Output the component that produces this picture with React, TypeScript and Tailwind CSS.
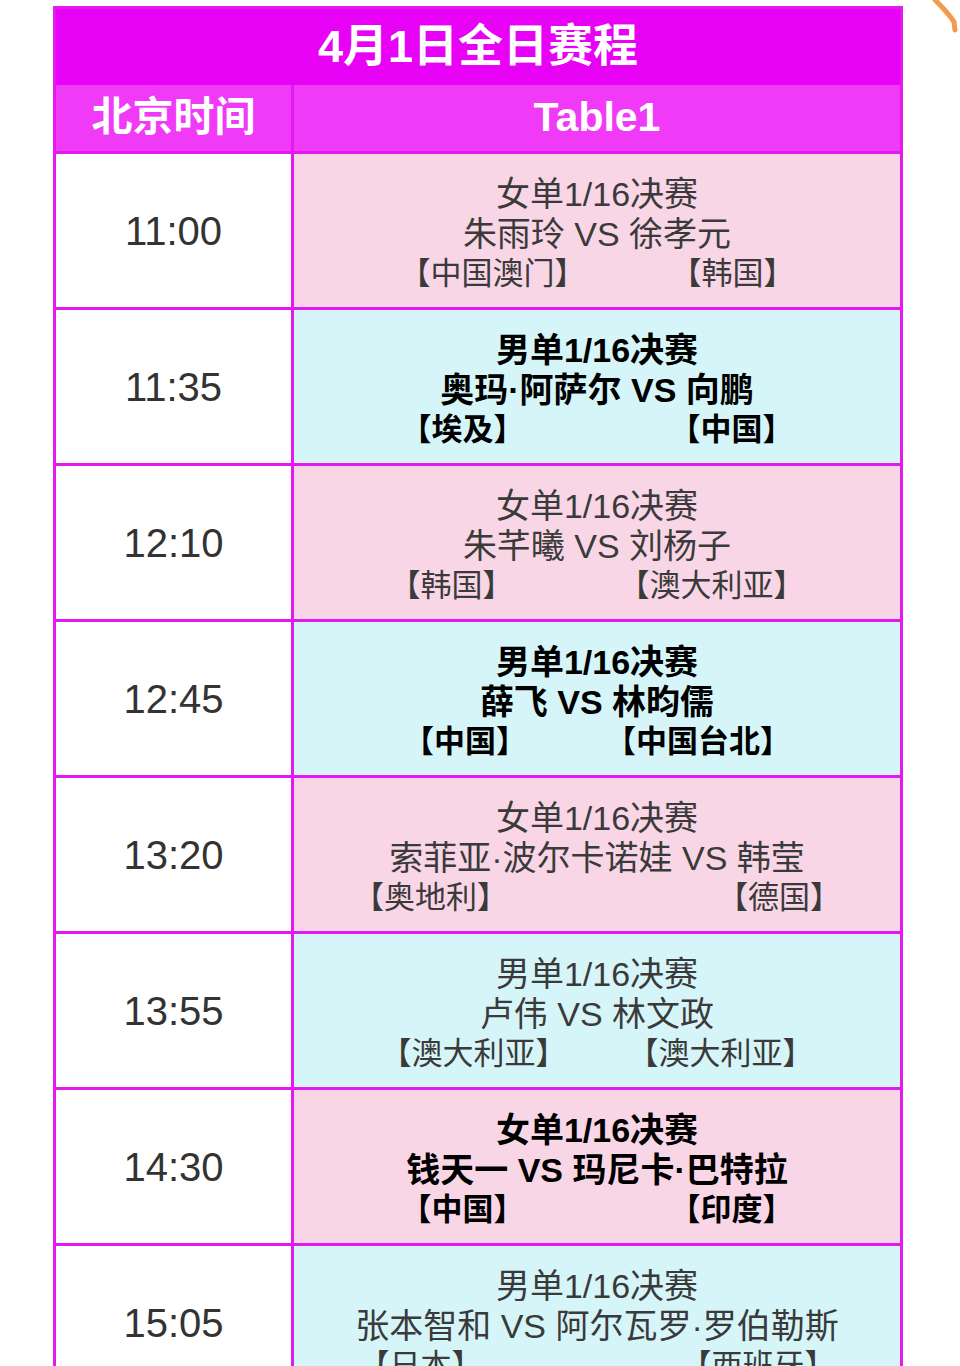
import React from "react";

type Match = {
  time: string;
  event: string;
  players: string;
  left: string;
  right: string;
  gap: string;
  bold?: boolean;
};

const matches: Match[] = [
  { time: "11:00", event: "女单1/16决赛", players: "朱雨玲 VS 徐孝元", left: "【中国澳门】", right: "【韩国】", gap: "gap-[85px]" },
  { time: "11:35", event: "男单1/16决赛", players: "奥玛·阿萨尔 VS 向鹏", left: "【埃及】", right: "【中国】", gap: "gap-[145px]", bold: true },
  { time: "12:10", event: "女单1/16决赛", players: "朱芊曦 VS 刘杨子", left: "【韩国】", right: "【澳大利亚】", gap: "gap-[105px]" },
  { time: "12:45", event: "男单1/16决赛", players: "薛飞 VS 林昀儒", left: "【中国】", right: "【中国台北】", gap: "gap-[78px]", bold: true },
  { time: "13:20", event: "女单1/16决赛", players: "索菲亚·波尔卡诺娃 VS 韩莹", left: "【奥地利】", right: "【德国】", gap: "gap-[209px]" },
  { time: "13:55", event: "男单1/16决赛", players: "卢伟 VS 林文政", left: "【澳大利亚】", right: "【澳大利亚】", gap: "gap-[61px]" },
  { time: "14:30", event: "女单1/16决赛", players: "钱天一 VS 玛尼卡·巴特拉", left: "【中国】", right: "【印度】", gap: "gap-[145px]", bold: true },
  { time: "15:05", event: "男单1/16决赛", players: "张本智和 VS 阿尔瓦罗·罗伯勒斯", left: "【日本】", right: "【西班牙】", gap: "gap-[198px]" },
];

const MatchRow = ({ m, index }: { m: Match; index: number }) => {
  const bg = index % 2 === 0 ? "bg-[#f8d6e6]" : "bg-[#d6f5f8]";
  const text = m.bold ? "font-bold text-black" : "text-[#3a3a3a]";
  return (
    <div className="flex h-[156px] border-t-[3px] border-[#e21af0]">
      <div className="w-[235px] shrink-0 bg-white flex items-center justify-center text-[40px] text-[#333]">
        {m.time}
      </div>
      <div className={`flex-1 border-l-[3px] border-[#e21af0] ${bg} flex flex-col items-center justify-center pt-[7px] leading-[40px] ${text}`}>
        <div className="text-[34px]">{m.event}</div>
        <div className="text-[34px] whitespace-nowrap">{m.players}</div>
        <div className={`flex ${m.gap} text-[31px] whitespace-nowrap`}>
          <span>{m.left}</span>
          <span>{m.right}</span>
        </div>
      </div>
    </div>
  );
};

export default function App() {
  return (
    <div className="relative w-[960px] h-[1366px] overflow-hidden bg-white pt-[6px] pl-[53px] font-['Liberation_Sans','Noto_Sans_CJK_SC',sans-serif]">
      {/* orange scribble in the corner */}
      <svg className="absolute right-0 top-0" width="40" height="40" viewBox="0 0 40 40">
        <path d="M12 -4 C18 4, 28 12, 34 22 L35 30" stroke="#f29a4e" strokeWidth="5" strokeLinecap="round" fill="none" />
      </svg>

      <div className="w-[850px] border-x-[3px] border-t-[3px] border-[#e21af0]">
        <div className="h-[76px] bg-[#e702f5] flex items-center justify-center text-white font-bold text-[45px]">
          4月1日全日赛程
        </div>
        <div className="flex h-[66px] bg-[#f03af7] text-white font-bold text-[41px]">
          <div className="w-[235px] shrink-0 flex items-center justify-center">北京时间</div>
          <div className="flex-1 border-l-[3px] border-[#e21af0] flex items-center justify-center">Table1</div>
        </div>
        {matches.map((m, i) => (
          <MatchRow key={m.time} m={m} index={i} />
        ))}
      </div>
    </div>
  );
}
